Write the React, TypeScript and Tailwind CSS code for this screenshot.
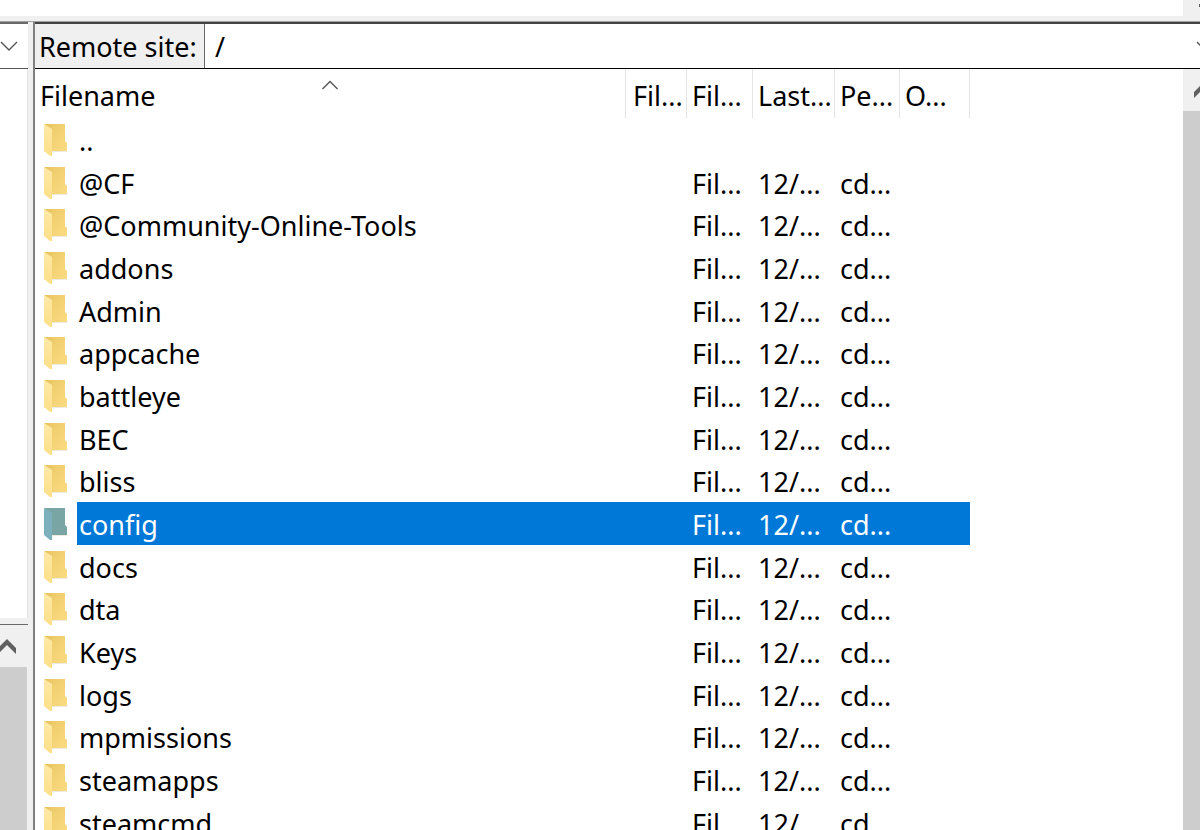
import React from "react";

type Entry = { name: string; parent?: boolean; selected?: boolean };

const entries: Entry[] = [
  { name: "..", parent: true },
  { name: "@CF" },
  { name: "@Community-Online-Tools" },
  { name: "addons" },
  { name: "Admin" },
  { name: "appcache" },
  { name: "battleye" },
  { name: "BEC" },
  { name: "bliss" },
  { name: "config", selected: true },
  { name: "docs" },
  { name: "dta" },
  { name: "Keys" },
  { name: "logs" },
  { name: "mpmissions" },
  { name: "steamapps" },
  { name: "steamcmd" },
];

function FolderIcon({ selected }: { selected?: boolean }) {
  const back = selected ? "#7aa5a5" : "url(#folder-back)";
  const flap = selected ? "#7db0bd" : "url(#folder-flap)";
  return (
    <svg width="26" height="34" viewBox="0 0 26 34" className="shrink-0" aria-hidden="true">
      <defs>
        <linearGradient id="folder-back" x1="0" y1="0" x2="1" y2="1">
          <stop offset="0" stopColor="#e8c35c" />
          <stop offset="0.35" stopColor="#f1cf70" />
          <stop offset="1" stopColor="#fbdc82" />
        </linearGradient>
        <linearGradient id="folder-flap" x1="0" y1="0" x2="0" y2="1">
          <stop offset="0" stopColor="#ffe9a8" />
          <stop offset="1" stopColor="#fddf88" />
        </linearGradient>
      </defs>
      <path d="M8 28h17l-2 1H8z" fill="#eeeae0" />
      <path d="M1 1h20v17l2 2v8H1z" fill={back} />
      <path d="M0 1l8 5v27l-2 0l-6-5z" fill={flap} />
    </svg>
  );
}

function ThinChevron({ up }: { up?: boolean }) {
  return (
    <svg width="18" height="10" viewBox="0 0 18 10" fill="none" className="shrink-0" aria-hidden="true">
      <path d={up ? "M1.5 9L9 1.5L16.5 9" : "M1 1L9 9L17 1"} stroke="#555" strokeWidth="1.4" />
    </svg>
  );
}

function ScrollArrow() {
  return (
    <svg width="18" height="15" viewBox="0 0 18 15" className="shrink-0" aria-hidden="true">
      <path d="M9 0L18 9v6L9 6L0 15V9z" fill="#606060" />
    </svg>
  );
}

function LocalPane() {
  return (
    <aside className="flex w-7 shrink-0 flex-col overflow-hidden border-t-2 border-[#696969]">
      <button
        type="button"
        aria-label="Local site history"
        className="flex h-[45px] shrink-0 items-center border-b border-[#555] bg-white"
      >
        <ThinChevron />
      </button>
      <div className="h-[549px] shrink-0 border-r border-[#e3e3e3] bg-white" />
      <div className="h-[7px] shrink-0 border-b border-[#696969] bg-[#f0f0f0]" />
      <div className="flex grow flex-col border-r border-[#f0f0f0] bg-[#cdcdcd]">
        <button
          type="button"
          aria-label="Scroll local list up"
          className="flex h-[42px] items-center justify-end bg-[#f0f0f0] pr-[11px]"
        >
          <ScrollArrow />
        </button>
      </div>
    </aside>
  );
}

function FileTable() {
  const head = "border-l border-[#e5e5e5] pl-[5px] pt-1 pb-0 pr-0 text-left font-normal";
  return (
    <table className="w-[935px] shrink-0 table-fixed border-separate border-spacing-0 self-start whitespace-nowrap">
      <colgroup>
        <col />
        <col className="w-[61px]" />
        <col className="w-[66px]" />
        <col className="w-[82px]" />
        <col className="w-[65px]" />
        <col className="w-[71px]" />
      </colgroup>
      <thead>
        <tr className="h-[49px]">
          <th className="p-0 pt-1 pl-[5px] text-left font-normal">
            <div className="relative">
              Filename
              <span className="absolute top-0 left-[281px] flex h-[14px] items-center">
                <ThinChevron up />
              </span>
            </div>
          </th>
          <th className="border-l border-[#e5e5e5] p-0 pt-1 pl-[7px] text-left font-normal">Fil...</th>
          <th className={head}>Fil...</th>
          <th className={head}>Last...</th>
          <th className={head}>Pe...</th>
          <th className={head + " border-r"}>O...</th>
        </tr>
      </thead>
      <tbody>
        {entries.map((entry) => {
          const tone = entry.selected ? "bg-[#0078d7] text-white" : "";
          return (
            <tr key={entry.name} className="h-[43px] nth-[3n]:h-[42px]">
              <td className="p-0">
                <div className="flex items-center pl-[9px]">
                  <FolderIcon selected={entry.selected} />
                  <span
                    className={
                      "ml-[7px] flex grow items-center pt-[2px] pl-[2px] " +
                      (entry.selected ? "h-[43px] " : "h-[42px] ") +
                      tone
                    }
                  >
                    {entry.name}
                  </span>
                </div>
              </td>
              <td className={"p-0 " + tone} />
              <td className={"p-0 pt-[2px] pl-[6px] " + tone}>{entry.parent ? "" : "Fil..."}</td>
              <td className={"p-0 pt-[2px] pl-[6px] " + tone}>{entry.parent ? "" : "12/..."}</td>
              <td className={"p-0 pt-[2px] pl-[6px] " + tone}>{entry.parent ? "" : "cd..."}</td>
              <td className={"p-0 " + tone} />
            </tr>
          );
        })}
      </tbody>
    </table>
  );
}

function RemotePane() {
  return (
    <main className="flex min-w-0 grow flex-col overflow-hidden border-l-2 border-[#808080] bg-white">
      <div className="flex h-[47px] shrink-0 border-t-2 border-b border-t-[#444] border-b-black">
        <label
          htmlFor="remote-path"
          className="flex w-[170px] shrink-0 items-center border-r border-[#696969] bg-[#f0f0f0] pt-[2px] pl-1 whitespace-nowrap"
        >
          Remote site:
        </label>
        <input
          id="remote-path"
          defaultValue="/"
          className="min-w-0 grow bg-white pt-[2px] pl-[10px] outline-none"
        />
        <button
          type="button"
          aria-label="Remote site history"
          className="flex w-1 shrink-0 items-center overflow-hidden bg-white"
        >
          <ThinChevron />
        </button>
      </div>
      <div className="flex min-h-0 grow overflow-hidden">
        <FileTable />
        <div className="grow" />
        <div className="flex w-[17px] shrink-0 flex-col overflow-hidden bg-[#cdcdcd]">
          <button
            type="button"
            aria-label="Scroll remote list up"
            className="flex h-[42px] items-center bg-[#f0f0f0] pl-[11px]"
          >
            <ScrollArrow />
          </button>
        </div>
      </div>
    </main>
  );
}

export default function App() {
  return (
    <div className="flex h-screen flex-col overflow-hidden bg-[#f0f0f0] font-['Noto_Sans','Open_Sans',sans-serif] text-[27px] leading-9 text-black">
      <div className="flex h-4 shrink-0 justify-end bg-white">
        <div className="flex w-[17px] justify-end bg-[#f0f0f0] pt-1">
          <div className="h-[3px] w-px bg-[#606060]" />
        </div>
      </div>
      <div className="h-[6px] shrink-0 border-b border-[#a0a0a0]" />
      <div className="flex min-h-0 grow gap-[5px]">
        <LocalPane />
        <RemotePane />
      </div>
    </div>
  );
}
